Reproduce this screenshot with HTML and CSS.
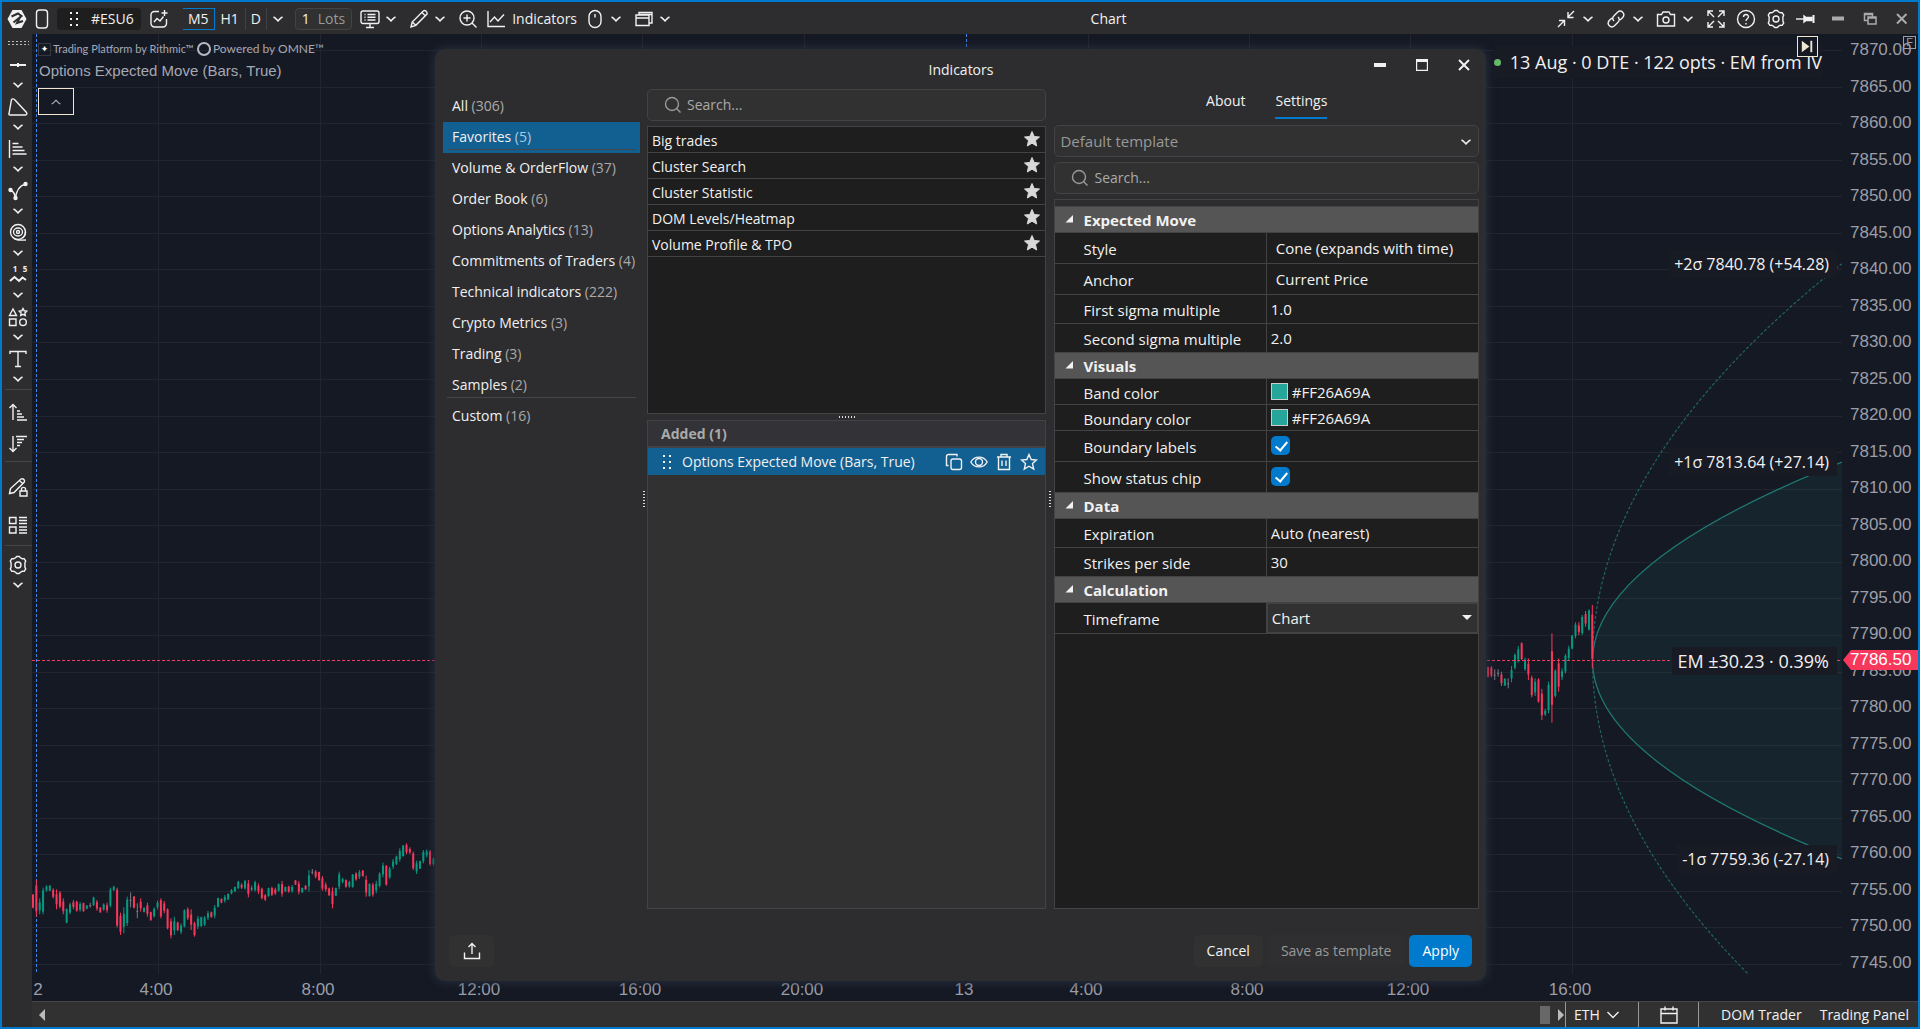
FILE: index.html
```html
<!DOCTYPE html>
<html lang="en">
<head>
    <meta charset="UTF-8"/>
    <meta name="viewport" content="width=device-width,initial-scale=1"/>
    <title>Chart</title>
    <link rel="stylesheet" href="styles.css">
</head>
<body>
<svg class="defs" aria-hidden="true">
    <symbol id="chev" viewBox="0 0 12 12"><path d="M1.500 4c2 .8 3 2.500 4.500 3.800 1.500-1.300 2.500-3 4.500-3.800"/></symbol>
    <symbol id="gear" viewBox="0 0 20 20"><path d="M7.500 2.800 8.800 1.500h2.400l1.300 1.300 1.700.9 2-.1 1.500 2.500-.8 1.800v4.200l.8 1.800-1.500 2.500-2-.1-1.700.9-1.300 1.300H8.800l-1.300-1.300-1.700-.9-2 .1-1.500-2.500.8-1.800V7.900l-.8-1.800 1.500-2.500 2 .1z"/><circle cx="10" cy="10" r="3"/></symbol>
    <symbol id="lens" viewBox="0 0 18 18"><circle cx="8" cy="8" r="6.500"/><path d="m12.800 12.800 3.700 3.700"/></symbol>
    <symbol id="star" viewBox="0 0 18 18"><path d="m9 1.500 2.200 5 5.300.5-4 3.600 1.200 5.400L9 13.200 4.300 16l1.200-5.400-4-3.600 5.300-.5z"/></symbol>
    <symbol id="grip" viewBox="0 0 10 14"><path d="M1 0h2v2H1zM7 0h2v2H7zM1 6h2v2H1zM7 6h2v2H7zM1 12h2v2H1zM7 12h2v2H7z"/></symbol>
</svg>

<div class="app">
    <header class="topbar">
        <div class="tools">
            <svg class="ico logo" viewBox="0 0 20 20"><path fill="#f1f1f1" stroke="none" d="M5.500 1h9L19.500 10l-5 9h-9L.5 10z"/><path stroke="#2d2d30" stroke-width="2" d="M4.500 7.500 11 4.500 14.500 7 6.500 13.500M13.500 7.500 10 14l6-2"/></svg>
            <svg class="ico-phone" viewBox="0 0 14 20"><rect x="1.500" y="1" width="11" height="18" rx="3"/></svg>
            <button class="symbol"><svg class="fill" viewBox="0 0 10 14"><use href="#grip"/></svg>#ESU6</button>
            <svg class="ico new-chart" viewBox="0 0 20 20"><path d="M10 2.500H5.500a3.500 3.500 0 0 0-3.500 3.500v8.500A3.500 3.500 0 0 0 5.500 18H14a3.500 3.500 0 0 0 3.500-3.500V10M5 13l3-3.500 3 2.500 3.500-4.500M15.500 1v6M12.500 4h6"/></svg>
            <div class="frames">
                <button class="frame on">M5</button><button class="frame">H1</button><button class="frame narrow">D</button>
                <button class="frame more" aria-label="More timeframes"><svg class="chev"><use href="#chev"/></svg></button>
                <div class="lots"><span>1</span>Lots</div>
            </div>
            <button class="pair" aria-label="View"><svg class="ico" viewBox="0 0 20 20"><rect x="1" y="2" width="18" height="12.500" rx="2"/><path d="M4.500 5.500h1M7.500 5.500h8M4.500 8.300h1M7.500 8.300h8M4.500 11h1M7.500 11h8M10 15v3M6 18.500h8"/></svg><svg class="chev"><use href="#chev"/></svg></button>
            <button class="pair" aria-label="Draw"><svg class="ico" viewBox="0 0 20 20"><path d="m2 18 1.200-5L14.500 1.800c1.800-1 4.200 1.200 3.500 3.200L6.800 16.300zM13 3.500 16.500 7M3.200 13l3.600 3.300"/></svg><svg class="chev"><use href="#chev"/></svg></button>
            <button class="single" aria-label="Zoom in"><svg class="ico" viewBox="0 0 20 20"><circle cx="9" cy="9" r="7"/><path d="m14 14 4.500 4.500M9 5.500v7M5.500 9h7"/></svg></button>
            <button class="single"><svg class="ico" viewBox="0 0 20 20"><path d="M2 2v15.500h17M4 13l4.500-5 3.500 4 6-6.500"/></svg>Indicators</button>
            <button class="pair" aria-label="Mouse"><svg class="ico" viewBox="0 0 20 20"><rect x="4" y="1.500" width="12" height="17" rx="6"/><path d="M10 5v3.500"/></svg><svg class="chev"><use href="#chev"/></svg></button>
            <button class="pair" aria-label="Windows"><svg class="ico" viewBox="0 0 20 20"><path d="M2 6h13v10.500H2zM2 9h13M5 6V3.500h13V14h-3M5 5.500h13"/></svg><svg class="chev"><use href="#chev"/></svg></button>
        </div>
        <h1 class="title">Chart</h1>
        <div class="tools-right">
            <button class="pair" aria-label="Collapse"><svg class="ico" viewBox="0 0 20 20"><path d="M18 2l-6.500 6.500M12 3v5.500h5.500M2 18l6.500-6.500M3 11.500h5.500V17"/></svg><svg class="chev"><use href="#chev"/></svg></button>
            <button class="pair" aria-label="Link"><svg class="ico" viewBox="0 0 20 20"><path d="M8 12c-1.800-1.800-1.500-4 0-5.300l3.500-3.500c3.700-3 8.300 1.500 5.300 5.300L14 11M12 8c1.800 1.800 1.500 4 0 5.300l-3.500 3.500c-3.700 3-8.300-1.500-5.300-5.300L6 9"/></svg><svg class="chev"><use href="#chev"/></svg></button>
            <button class="pair" aria-label="Screenshot"><svg class="ico" viewBox="0 0 20 20"><path d="M1.500 5.500h4L7 3h6l1.500 2.500h4V17h-17z"/><circle cx="10" cy="11" r="3"/></svg><svg class="chev"><use href="#chev"/></svg></button>
            <button aria-label="Full screen"><svg class="ico" viewBox="0 0 20 20"><path d="M8 8 2 2M2 7V2h5M12 8l6-6M13 2h5v5M8 12l-6 6M2 13v5h5M12 12l6 6M18 13v5h-5"/></svg></button>
            <button aria-label="Help"><svg class="ico" viewBox="0 0 20 20"><circle cx="10" cy="10" r="8.500"/><path d="M7.500 8c.2-3.500 5.200-3.200 5 0-.2 1.800-2.500 1.800-2.500 4M10 14v1.500"/></svg></button>
            <button aria-label="Settings"><svg class="ico" viewBox="0 0 20 20"><use href="#gear"/></svg></button>
            <button aria-label="Pin"><svg class="ico" viewBox="0 0 20 20"><path d="M0 10h8"/><path fill="#f1f1f1" d="M8 7v6l2-1.500h6V8.500h-6z"/><path stroke-width="2" d="M17.500 6v8"/></svg></button>
            <div class="winbtns">
                <button aria-label="Minimize"><svg class="ico" viewBox="0 0 20 20"><path stroke-width="4" d="M4 9.500h12"/></svg></button>
                <button aria-label="Restore"><svg class="ico" viewBox="0 0 20 20"><path stroke-width="1.500" d="M8 8h8v7H8zM8 11.500H4.500V4.500h8V8M4.500 5.500h8M8 9h8"/></svg></button>
                <button aria-label="Close"><svg class="ico" viewBox="0 0 20 20"><path stroke-width="2" d="m5 5 9.500 9.500M14.500 5 5 14.500"/></svg></button>
            </div>
        </div>
    </header>

    <nav class="sidebar" aria-label="Drawing tools">
        <span class="side-grip"></span>
        <button class="side"><svg class="ico" viewBox="0 0 20 20"><path stroke-width="2" d="M2 10h16M10 8v4"/></svg><svg class="chev"><use href="#chev"/></svg></button>
        <button class="side"><svg class="ico" viewBox="0 0 20 20"><path d="M3.500 2.500c1-1 2.500-.8 3.500.5l11.500 12.500c.8 1.500.2 2.500-1 2.500H2c-1 0-1.300-.5-1-1.500z"/></svg><svg class="chev"><use href="#chev"/></svg></button>
        <button class="side"><svg class="ico" viewBox="0 0 20 20"><path d="M1.500 1v18M4.500 4.500h6M4.500 8h10M4.500 11.500h12M4.500 15h14"/></svg><svg class="chev"><use href="#chev"/></svg></button>
        <button class="side"><svg class="ico" viewBox="0 0 20 20"><path d="M2.500 9C5 10 7 12.500 7.500 18 8 10 12 4.500 17.500 3"/><g class="dot"><circle cx="2.500" cy="9" r="1.500"/><circle cx="7.500" cy="17" r="1.500"/><circle cx="17.500" cy="3" r="1.500"/></g></svg><svg class="chev"><use href="#chev"/></svg></button>
        <button class="side"><svg class="ico" viewBox="0 0 20 20"><circle cx="10" cy="9" r="7.500"/><ellipse cx="10" cy="9" rx="4.500" ry="4"/><circle cx="10" cy="9" r="1.500"/><path d="M5.500 15c3 3 6 2 12.500 2M17.500 9c0 3-1.500 5-3 6"/></svg><svg class="chev"><use href="#chev"/></svg></button>
        <button class="side"><svg class="ico" viewBox="0 0 20 20"><path stroke-width="2" d="m2 16 4.500-4 4.500 4 3.500-3.500 3.500 2.500"/><text x="7" y="7">1</text><text x="17" y="7">5</text></svg><svg class="chev"><use href="#chev"/></svg></button>
        <button class="side"><svg class="ico" viewBox="0 0 20 20"><path d="M5 2 1.500 8.500h7zM1.500 12h6.500v6.500H1.500zM15 1.500l1.200 2.300 2.500.4-1.800 1.800.4 2.600-2.300-1.200-2.300 1.200.4-2.600-1.800-1.800 2.500-.4z"/><circle cx="15" cy="15.200" r="3.300"/></svg><svg class="chev"><use href="#chev"/></svg></button>
        <button class="side"><svg class="ico" viewBox="0 0 20 20"><path d="M2 5V2.500h16V5M10 2.500V17.500M7 17.500h6"/></svg><svg class="chev"><use href="#chev"/></svg></button>
        <hr>
        <button class="side-one"><svg class="ico" viewBox="0 0 20 20"><path d="M5 18V2.500M1.500 6 5 2.500 8.500 6M9 9h3M9 12h5M9 15h7M9 18h10"/></svg></button>
        <button class="side-one"><svg class="ico" viewBox="0 0 20 20"><path d="M5 2v15.500M1.500 14 5 17.500 8.500 14M8 2.500h11M9 5.500h7M9 8.500h5M9 11.500h3"/></svg></button>
        <hr>
        <button class="side-one tall"><svg class="ico" viewBox="0 0 20 20"><path d="m1.500 16.500 1-5L13 2c1.800-1 4.300 1 3.300 3L6 15.500zM11.500 3.500l3 3M12 14h7v5h-7zM13.500 14v-2.500c.5-1.500 3.500-1.500 4 0V14"/></svg></button>
        <button class="side-one tall"><svg class="ico" viewBox="0 0 20 20"><path d="M1.500 2.500h6.500v6H1.500zM1.500 12h6.500v6H1.500zM11 2.500h8M11 5.500h8M11 8.500h8M11 12h8M11 15h8M11 18h8"/></svg></button>
        <hr>
        <button class="side"><svg class="ico" viewBox="0 0 20 20"><use href="#gear"/></svg><svg class="chev"><use href="#chev"/></svg></button>
    </nav>

    <main class="chart">
        <div class="plot">
            <svg class="series" id="series" viewBox="0 0 1810 940" preserveAspectRatio="none"></svg>
            <div class="legend">
                <div class="brand"><i>✦</i><span>Trading Platform by Rithmic™</span><b></b><em>Powered by OMNE™</em></div>
                <div class="study">Options Expected Move (Bars, True)</div>
                <button class="fold" aria-label="Collapse legend"><svg class="chev up"><use href="#chev"/></svg></button>
            </div>
            <div class="chip"><i></i>13 Aug · 0 DTE · 122 opts · EM from IV</div>
            <button class="to-end" aria-label="Scroll to last bar"><svg viewBox="0 0 20 20"><path d="M4 4v12l8-6z"/><path d="M13 4h2v12h-2z"/></svg></button>
            <div id="tags"></div>
        </div>
        <div class="prices" id="prices"></div>
        <div class="times" id="times"></div>
        <span class="fixed-flag">F</span>
    </main>

    <footer class="status">
        <svg class="arrow" viewBox="0 0 6 12"><path d="M6 0v12L0 6z"/></svg>
        <span class="thumb"></span>
        <svg class="arrow right" viewBox="0 0 6 12"><path d="M0 0v12l6-6z"/></svg>
        <button class="session">ETH<svg viewBox="0 0 12 8"><path d="m.5 1 5.500 5.500L11.500 1"/></svg></button>
        <button class="calendar" aria-label="Calendar"><svg class="ico" viewBox="0 0 20 20"><path d="M2 4h16v14H2zM2 8.500h16M6 1.500v4M14 1.500v4"/></svg></button>
        <div class="panels"><button>DOM Trader</button><button>Trading Panel</button></div>
    </footer>

    <section class="dialog" role="dialog" aria-labelledby="dlgTitle">
        <div class="dlg-head">
            <h2 id="dlgTitle">Indicators</h2>
            <div class="dlg-win">
                <button aria-label="Minimize"><svg viewBox="0 0 12 12"><path stroke-width="4" d="M0 6h12"/></svg></button>
                <button aria-label="Maximize"><svg viewBox="0 0 12 12"><path d="M.5 1h11v10.500H.5z"/><path stroke-width="3" d="M0 1.500h12"/></svg></button>
                <button aria-label="Close"><svg viewBox="0 0 12 12"><path stroke-width="2" d="m1 1 10 10M11 1 1 11"/></svg></button>
            </div>
        </div>

        <div class="dlg-body">
            <ul class="cats">
                <li><a href="#">All <small>(306)</small></a></li>
                <li class="on rule"><a href="#">Favorites <small>(5)</small></a></li>
                <li><a href="#">Volume &amp; OrderFlow <small>(37)</small></a></li>
                <li><a href="#">Order Book <small>(6)</small></a></li>
                <li><a href="#">Options Analytics <small>(13)</small></a></li>
                <li><a href="#">Commitments of Traders <small>(4)</small></a></li>
                <li><a href="#">Technical indicators <small>(222)</small></a></li>
                <li><a href="#">Crypto Metrics <small>(3)</small></a></li>
                <li><a href="#">Trading <small>(3)</small></a></li>
                <li class="rule"><a href="#">Samples <small>(2)</small></a></li>
                <li><a href="#">Custom <small>(16)</small></a></li>
            </ul>

            <div class="split-v"><span></span></div>

            <div class="middle">
                <label class="search"><svg class="lens"><use href="#lens"/></svg><input type="search" placeholder="Search..." aria-label="Search indicators"></label>
                <ul class="list">
                    <li>Big trades<svg class="star"><use href="#star"/></svg></li>
                    <li>Cluster Search<svg class="star"><use href="#star"/></svg></li>
                    <li>Cluster Statistic<svg class="star"><use href="#star"/></svg></li>
                    <li>DOM Levels/Heatmap<svg class="star"><use href="#star"/></svg></li>
                    <li>Volume Profile &amp; TPO<svg class="star"><use href="#star"/></svg></li>
                </ul>
                <div class="split-h"><span></span></div>
                <div class="added">
                    <h3>Added (1)</h3>
                    <div class="added-row">
                        <svg class="fill" viewBox="0 0 10 14"><use href="#grip"/></svg>
                        <span>Options Expected Move (Bars, True)</span>
                        <button aria-label="Duplicate"><svg viewBox="0 0 18 18"><rect x="6" y="6" width="10.500" height="10.500" rx="2"/><path d="M3.500 12.500H1.500v-9a2 2 0 0 1 2-2h8.500v2"/></svg></button>
                        <button aria-label="Hide"><svg viewBox="0 0 18 18"><path d="M.8 9C4.500 2.500 13.500 2.500 17.200 9c-3.700 6.500-12.700 6.500-16.400 0z"/><circle cx="9" cy="9" r="3.500"/></svg></button>
                        <button aria-label="Delete"><svg viewBox="0 0 18 18"><path d="M2 4h14M3.500 4v12.500h11V4M6 4V1.500h6V4M7 7.500v5.500M11 7.500v5.500"/></svg></button>
                        <button aria-label="Favorite"><svg viewBox="0 0 18 18"><use href="#star"/></svg></button>
                    </div>
                </div>
            </div>

            <div class="split-v"><span></span></div>

            <div class="right">
                <div class="tabs"><button>About</button><button class="on">Settings</button></div>
                <div class="template">
                    <select aria-label="Template"><option>Default template</option></select>
                    <svg class="chev"><use href="#chev"/></svg>
                </div>
                <label class="search"><svg class="lens"><use href="#lens"/></svg><input type="search" placeholder="Search..." aria-label="Search settings"></label>
                <div class="props">
                    <h4>Expected Move</h4>
                    <div class="prop tall"><label for="style">Style</label><select id="style" class="pad"><option>Cone (expands with time)</option></select></div>
                    <div class="prop tall"><label for="anchor">Anchor</label><select id="anchor" class="pad"><option>Current Price</option></select></div>
                    <div class="prop"><label for="sigma1">First sigma multiple</label><input type="text" id="sigma1" value="1.0"></div>
                    <div class="prop"><label for="sigma2">Second sigma multiple</label><input type="text" id="sigma2" value="2.0"></div>
                    <h4>Visuals</h4>
                    <div class="prop short"><label for="band">Band color</label><div class="color"><i></i><input type="text" id="band" value="#FF26A69A"></div></div>
                    <div class="prop short"><label for="boundary">Boundary color</label><div class="color"><i></i><input type="text" id="boundary" value="#FF26A69A"></div></div>
                    <div class="prop tall"><label for="labels">Boundary labels</label><input type="checkbox" id="labels" checked></div>
                    <div class="prop tall"><label for="status">Show status chip</label><input type="checkbox" id="status" checked></div>
                    <h4>Data</h4>
                    <div class="prop"><label for="expiration">Expiration</label><input type="text" id="expiration" value="Auto (nearest)"></div>
                    <div class="prop"><label for="strikes">Strikes per side</label><input type="text" id="strikes" value="30"></div>
                    <h4>Calculation</h4>
                    <div class="prop tall"><label for="timeframe">Timeframe</label><div class="combo"><select id="timeframe"><option>Chart</option></select></div></div>
                </div>
            </div>
        </div>

        <div class="dlg-foot">
            <button class="btn share" aria-label="Export"><svg class="ico" viewBox="0 0 20 20"><path d="M10 13V3M6.500 6 10 2.500 13.500 6M2.500 11.500v6h15v-6"/></svg></button>
            <button class="btn">Cancel</button>
            <button class="btn off">Save as template</button>
            <button class="btn primary">Apply</button>
        </div>
    </section>
</div>

<script src="chart.js"></script>
</body>
</html>
```

FILE: chart.js
```js
const W = 1810, H = 940;
const TOP_PRICE = 7870, TOP_Y = 16, PX = 7.312;   // px per point
const LAST = 7786.5;
const priceY = p => TOP_Y + (TOP_PRICE - p) * PX;

const times = [[4, '2', 'day'], [126, '4:00'], [288, '8:00'], [449, '12:00'], [610, '16:00'], [772, '20:00'],
    [934, '13', 'day'], [1056, '4:00'], [1217, '8:00'], [1378, '12:00'], [1540, '16:00']];

// colour, high, low, in thirds of a pixel below the block's base line
const night = `R222-265 R180-290 G235-283 G203-283 G196-215 G196-213 R205-235 R208-268 R213-265 R235-283 G265-310 G248-283
R240-268 R242-275 G246-275 R248-275 G255-268 N248-263 G230-258 R240-272 R262-278 G250-272 R248-278 G203-262 G197-213 R203-322
R278-345 G262-340 G230-318 N217-262 R228-265 N250-295 R235-275 G262-277 R248-290 R275-302 G262-293 G242-268 R235-295 R243-280
R265-328 R295-355 G290-345 R305-333 G310-342 G268-322 R262-300 R268-330 R305-350 G288-327 G290-320 G288-318 G273-300 R275-293
G255-295 G233-262 R235-250 G225-248 G220-240 G207-223 G200-215 G182-208 R190-207 G180-208 R180-232 N197-213 G182-215 R190-222
R203-238 R222-243 G203-230 R200-228 R203-225 G190-215 R183-230 G200-215 R197-218 G195-218 R180-195 R183-223 G203-218 R195-210
G150-215 N147-163 R150-175 R155-182 R168-212 R187-215 R203-228 R202-265 G203-228 G155-208 G173-190 R178-203 G182-203 G162-203
R157-182 G150-177 R150-170 R167-230 G190-230 R188-230 G182-220 G157-202 G128-172 R135-197 G140-177 G117-147 G107-135 G85-125
G75-110 R70-102 R82-102 R95-150 G122-162 G122-147 G90-130 G88-112 R90-137 G112-137`;
const day = `R320-352 R318-352 N328-360 N328-350 R335-378 G355-378 N355-385 G318-367 G280-328 G258-308 R247-300 G293-333
R295-360 R347-412 G355-408 R355-428 R387-480 G447-468 G365-460 R220-488 G328-412 R295-395 G325-360 G282-340 G257-303 G225-268
G187-235 R187-225 G165-225 R153-200 G148-212 R135-325`;
const colors = {R: '#f7385c', G: '#089981', N: '#787b86'};

function bars(text, x0, base) {
    return text.split(/\s+/).map((t, i) => {
        const [hi, lo] = t.slice(1).split('-').map(Number);
        const x = x0 + i * 3.365, y = base + hi / 3, h = (lo - hi) / 3;
        const inset = t[0] === 'N' ? h / 2 : h * (0.05 + (i * 7 % 5) * 0.05);
        return `<g fill="${colors[t[0]]}"><rect x="${x - 0.5}" y="${y}" width="1" height="${h}"/>` +
            `<rect x="${x - 1}" y="${y + inset}" width="2" height="${Math.max(h - inset * 2, 1)}"/></g>`;
    }).join('');
}

let out = '';
for (let p = 7870; p >= 7745; p -= 5) out += `<path class="grid" d="M0 ${Math.round(priceY(p)) + .5}H${W}"/>`;
times.forEach(([x, , kind]) => out += `<path class="${kind || 'grid'}" d="M${x + .5} 0V${H}"/>`);

// the expected move grows with the square root of time, so each cone is a parabola
const apex = 1560.500, y0 = priceY(LAST);
const cone = m => `M${W} ${y0 - m * PX}Q${2 * apex - W} ${y0} ${W} ${y0 + m * PX}`;
out += `<path class="band" d="${cone(27.14)}"/><path class="sigma1" d="${cone(27.14)}"/><path class="sigma2" d="${cone(54.28)}"/>`;
out += bars(night, 1, 786) + bars(day, 1456, 526);
out += `<path class="last" d="M0 ${Math.floor(y0) + .5}H${W}"/>`;
document.getElementById('series').innerHTML = out;

let labels = '';
for (let p = 7870; p >= 7745; p -= 5) labels += `<span>${p.toFixed(2)}</span>`;
labels += `<b style="top:${Math.floor(y0) / H * 100}%">${LAST.toFixed(2)}</b>`;
document.getElementById('prices').innerHTML = labels;

// the first label is kept clear of the left edge
document.getElementById('times').innerHTML = times
    .map(([x, t]) => `<span style="left:${Math.max(x - 2, 6) / W * 100}%">${t}</span>`).join('');

document.getElementById('tags').innerHTML = [
    [7840.78, '+2σ 7840.78 (+54.28)'], [7813.64, '+1σ 7813.64 (+27.14)'],
    [7786.5, 'EM ±30.23 · 0.39%', 'em'], [7759.36, '-1σ 7759.36 (-27.14)']
].map(([p, t, c]) => `<span class="tag ${c || ''}" style="top:${priceY(p) / H * 100}%">${t}</span>`).join('');
```

FILE: styles.css
```css
* { box-sizing: border-box; }
body { margin: 0; background: #151924; color: #f1f1f1; font: 14px/20px "Open Sans", sans-serif; }
h1, h2, h3, h4, ul { margin: 0; padding: 0; font-size: inherit; font-weight: normal; list-style: none; }
button, input, select { font: inherit; color: inherit; background: none; border: 0; padding: 0; margin: 0; outline: 0; }
button { display: flex; flex: none; align-items: center; justify-content: center; }
select, input { appearance: none; }
a { color: inherit; text-decoration: none; }
svg { fill: none; stroke: currentColor; stroke-width: 1.4; flex: none; }
.defs { position: absolute; width: 0; height: 0; }
.ico { width: 20px; height: 20px; overflow: visible; }
.chev { width: 12px; height: 12px; stroke-width: 1.7; }
.fill { width: 10px; height: 14px; fill: currentColor; stroke: none; }

.app { position: relative; height: 100vh; border: 2px solid #007acc; display: grid; grid-template: 32px 1fr 26px / 30px 1fr; background: #2d2d30; }

/* top bar */
.topbar { grid-column: 1 / 3; display: flex; align-items: center; justify-content: space-between; padding: 2px 6px 0 5px; background: #2d2d30; }
.tools { display: flex; align-items: center; gap: 8px; }
.ico-phone { width: 14px; height: 20px; }
.symbol { gap: 12px; height: 22px; padding: 0 7px 0 12px; background: #1e1e1e; border-radius: 4px; }
.new-chart { margin-right: 6px; }
.frames { display: flex; align-items: center; }
.frame { width: 30px; height: 22px; }
.frame.on { width: 32px; border: solid #007acc; border-width: 1px 1px 1px 0; }
.frame.narrow { width: 22px; border: solid #3f3f46; border-width: 0 1px; }
.frame.more { width: 28px; padding-right: 6px; }
.lots { display: flex; align-items: center; gap: 8px; height: 22px; padding: 0 6px; border: 1px solid #434346; border-radius: 4px; background: #313131; color: #999; }
.lots span { color: #f1f1f1; }
.pair { gap: 5px; margin-right: 4px; }
.single { gap: 6px; }
.title { font-size: 14px; padding-right: 14px; }
.tools-right { display: flex; gap: 10px; }
.tools-right .pair { gap: 6px; margin-right: 2px; }
.winbtns { display: flex; gap: 12px; margin-left: 2px; color: #aaa; }

/* drawing tools */
.sidebar { grid-row: 2 / 4; display: flex; flex-direction: column; align-items: center; padding: 6px 0 0 2px; }
.side-grip { width: 22px; height: 6px; margin-bottom: 6px; background: radial-gradient(circle, #bbb 0 1px, transparent 1px) 0 0 / 4px 3px; }
.side { flex-direction: column; height: 42px; gap: 4px; }
.side-one { height: 32px; }
.side-one.tall { height: 38px; }
.sidebar .dot { fill: currentColor; }
.sidebar text { font: bold 8px "Open Sans", sans-serif; text-anchor: middle; fill: currentColor; stroke: none; }
.sidebar hr { flex: none; width: 27px; margin: 1px 0 6px; border: 0; border-top: 1px solid #46464a; }

/* chart */
.chart { position: relative; display: grid; grid-template: 1fr 27px / 1fr 76px; background: #151924; min-height: 0; }
.plot { position: relative; min-height: 0; }
.series { position: absolute; width: 100%; height: 100%; stroke: none; }
.series .grid { stroke: #22252f; stroke-width: 1; }
.series .day { stroke: #4285e8; stroke-width: 1; stroke-dasharray: 3 2; }
.series .band { fill: #26a69a; fill-opacity: .08; }
.series .sigma1 { stroke: #1f7872; stroke-width: 1.3; }
.series .sigma2 { stroke: #1f6662; stroke-width: 1.2; stroke-dasharray: 3 2; }
.series .last { stroke: #f7385c; stroke-width: 1; stroke-dasharray: 3 2; }
.prices { position: relative; display: flex; flex-direction: column; justify-content: space-between; padding: 6px 0 1px 8px; color: #9b9ea8; font: 17px/20px "Liberation Sans", sans-serif; }
.prices b { position: absolute; left: 1px; right: 0; height: 20px; margin-top: -10px; padding-left: 7px; background: #f7385c; color: #fff; font-weight: normal; clip-path: polygon(0 50%, 8px 0, 100% 0, 100% 100%, 8px 100%); }
.times { position: relative; color: #9b9ea8; font: 17px/20px "Liberation Sans", sans-serif; }
.times span { position: absolute; top: 6px; transform: translateX(-50%); }
.fixed-flag { position: absolute; top: 2px; right: 2px; width: 13px; height: 13px; border: 1px solid #9b9ea8; color: #9b9ea8; font: 11px/11px "Liberation Sans", sans-serif; text-align: center; }
.legend { position: absolute; top: 6px; left: 6px; color: #a5a8b3; }
.brand { display: flex; align-items: center; height: 18px; font: 12px/18px Lato, sans-serif; }
.brand i { width: 13px; height: 13px; margin-right: 2px; border: 1px solid #343843; color: #fff; font: 9px/11px "DejaVu Sans", sans-serif; text-align: center; }
.brand b { width: 14px; height: 14px; margin: 0 2px 0 3px; border: 2px solid #b5b8c0; border-radius: 50%; }
.brand em { font-style: normal; }
.brand span { font-size: 11px; }
.study { padding-left: 1px; font: 15px/26px "Liberation Sans", sans-serif; }
.fold { width: 36px; height: 27px; margin-top: 4px; border: 1px solid #f0e6d2; }
.up { transform: rotate(180deg); stroke-width: 1.2; }
.chip { position: absolute; top: 12px; right: 20px; display: flex; align-items: center; gap: 9px; font-size: 18px; line-height: 32px; background: #191b24; }
.chip i { width: 7px; height: 7px; border-radius: 50%; background: #66bb6a; }
.to-end { position: absolute; top: 2px; right: 24px; width: 21px; height: 21px; border: 1px solid #f0e6d2; background: #151924; }
.to-end svg { width: 19px; height: 19px; fill: #f0e6d2; stroke: none; }
.tag { position: absolute; right: 5px; padding: 0 8px 0 5px; transform: translateY(-50%); background: #191b24; font-size: 16px; line-height: 28px; }
.tag.em { font-size: 18px; }

/* status bar */
.status { display: flex; align-items: stretch; background: #313131; border-top: 1px solid #464649; }
.status .arrow { width: 6px; height: 12px; margin: 7px auto 0 7px; fill: #bbb; stroke: none; }
.thumb { width: 10px; height: 18px; margin-top: 4px; background: #686868; }
.status .arrow.right { margin: 7px 1px 0 8px; }
.session { justify-content: flex-start; width: 73px; padding-left: 8px; gap: 7px; border-left: 1px solid #999; }
.session svg { width: 12px; height: 8px; }
.calendar { width: 61px; border: solid #999; border-width: 0 1px; }
.panels { display: flex; gap: 18px; padding: 0 9px 0 22px; }

/* dialog */
.dialog { position: absolute; top: 47px; right: 432px; bottom: 46px; left: 433px; display: flex; flex-direction: column; padding: 0 7px 0 8px; background: #2d2d30; border-radius: 10px; box-shadow: 0 0 10px 1px #28303f; }
.dlg-head { position: relative; display: flex; justify-content: center; height: 40px; padding-top: 11px; }
.dlg-win { position: absolute; top: 10px; right: 9px; display: flex; gap: 30px; }
.dlg-win svg { width: 12px; height: 12px; }
.dlg-body { flex: 1; display: grid; grid-template-columns: 197px 7px minmax(0, 399fr) 8px minmax(0, 424fr); min-height: 0; }
.cats { padding-top: 2px; }
.cats li { position: relative; height: 31px; padding: 5px 0 0 9px; white-space: nowrap; }
.cats small { font-size: inherit; color: #aaa; }
.cats .on { background: #125f92; }
.cats .on small { color: #a9cbe2; }
.cats .rule::after { content: ""; position: absolute; right: 4px; bottom: 3px; left: 4px; border-top: 1px solid #46464a; }
.split-v { display: flex; align-items: center; justify-content: center; }
.split-v span { width: 2px; height: 16px; background: repeating-linear-gradient(#ddd 0 1px, transparent 1px 3px); }
.middle, .right { display: flex; flex-direction: column; min-height: 0; }
.search { display: flex; align-items: center; height: 32px; padding: 0 16px; gap: 5px; border: 1px solid #434346; border-radius: 5px; background: #313131; color: #999; }
.search input { flex: 1; min-width: 0; }
.search input::placeholder { color: #aaa; }
.lens { width: 18px; height: 18px; }
.list { flex: 288 1 0; margin-top: 5px; border: 1px solid #434346; background: #1e1e1e; }
.list li { display: flex; align-items: center; justify-content: space-between; height: 26px; padding: 3px 4px 0; border-bottom: 1px solid #434346; }
.star { width: 18px; height: 18px; margin-top: -4px; fill: #d8d8d8; stroke: #d8d8d8; stroke-width: 1; }
.split-h { display: flex; align-items: center; justify-content: center; height: 6px; }
.split-h span { width: 16px; height: 2px; background: repeating-linear-gradient(90deg, #ddd 0 1px, transparent 1px 3px); }
.added { flex: 490 1 0; border: 1px solid #434346; background: #313131; }
.added h3 { height: 27px; padding: 3px 13px; border-bottom: 2px solid #434346; background: #333337; color: #aaa; font-weight: bold; }
.added-row { display: flex; align-items: center; height: 27px; padding: 0 7px 0 14px; gap: 7px; background: #125f92; }
.added-row span { flex: 1; padding-left: 3px; white-space: nowrap; }
.added-row svg:not(.fill) { width: 18px; height: 18px; }
.tabs { display: flex; justify-content: center; gap: 30px; height: 36px; padding-top: 2px; }
.tabs button { height: 28px; padding-bottom: 6px; border-bottom: 2px solid transparent; }
.tabs button.on { border-color: #007acc; }
.template { position: relative; display: flex; height: 32px; margin-bottom: 5px; border: 1px solid #434346; border-radius: 5px; background: #313131; color: #999; }
.template select { flex: 1; padding: 0 5px; font-size: 15px; }
.template .chev { position: absolute; top: 10px; right: 6px; color: #f1f1f1; }
.props { flex: 1; min-height: 0; margin-top: 5px; padding-top: 7px; border: 1px solid #434346; background: linear-gradient(#2d2d30 6px, #434346 6px 7px, #1e1e1e 7px); font-size: 15px; }
.props h4 { display: flex; align-items: center; height: 26px; border-bottom: 1px solid #434346; padding-left: 10px; background: #555; font-weight: bold; }
.props h4::before { content: ""; width: 8px; height: 8px; margin: -2px 10px 0 0; background: #f1f1f1; clip-path: polygon(100% 0, 100% 100%, 0 100%); }
.prop { display: grid; grid-template-columns: 1fr 1fr; height: 29px; border-bottom: 1px solid #434346; }
.prop.tall { height: 31px; }
.prop.short { height: 26px; }
.prop label { display: flex; align-items: center; padding: 2px 0 0 28px; border-right: 1px solid #434346; }
.prop input, .prop select { min-width: 0; width: 100%; padding: 0 4px; }
.prop .pad { padding-left: 9px; }
.color { display: flex; align-items: center; min-width: 0; padding-left: 4px; }
.color i { width: 17px; height: 17px; flex: none; border: 1px solid #ccc; background: #26a69a; }
.prop input[type=checkbox] { position: relative; width: 19px; height: 19px; margin: 5px 4px; border-radius: 5px; background: #007acc; }
.prop input[type=checkbox]::after { content: ""; position: absolute; top: 3px; left: 7px; width: 5px; height: 10px; border: solid #fff; border-width: 0 2px 2px 0; transform: rotate(40deg); }
.combo { position: relative; display: flex; min-width: 0; border: 1px solid #434346; background: #313131; }
.combo::after { content: ""; position: absolute; top: 11px; right: 5px; border: 5px solid transparent; border-top-color: #f1f1f1; }
.dlg-foot { display: flex; gap: 5px; padding: 26px 7px 14px 6px; }
.btn { height: 32px; padding: 0 13px; border-radius: 5px; background: #313131; }
.btn.share { width: 45px; margin-right: auto; }
.btn.off { color: #999; background: #2f2f31; }
.btn.primary { background: #007acc; color: #fff; }
```
